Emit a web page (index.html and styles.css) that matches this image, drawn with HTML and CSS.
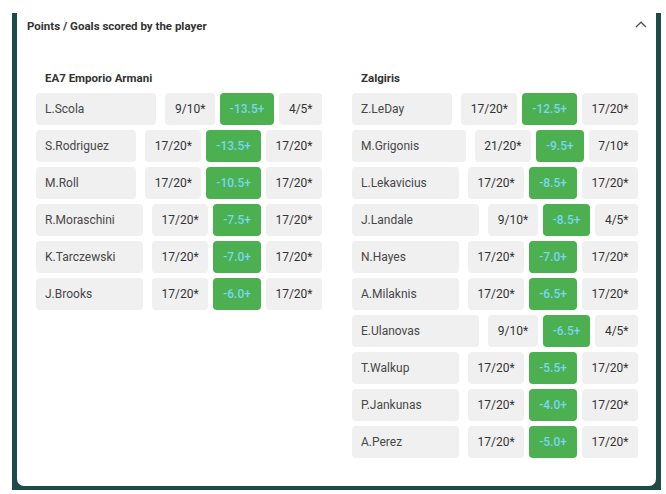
FILE: index.html
```html
<!DOCTYPE html>
<html>
<head>
<meta charset="utf-8">
<link rel="stylesheet" href="styles.css">
</head>
<body>
<div class="frame">
  <div class="card">
    <div class="header">
      <div class="title">Points / Goals scored by the player</div>
      <svg class="chev" width="12" height="7" viewBox="0 0 12 7"><path d="M1 6 L6 1.2 L11 6" fill="none" stroke="#555" stroke-width="1.3"/></svg>
    </div>
    <div class="columns">
      <div class="team">
        <div class="team-name">EA7 Emporio Armani</div>
        <div class="rows">
          <div class="row"><div class="name">L.Scola</div><div class="odd">9/10*</div><div class="line">-13.5+</div><div class="odd">4/5*</div></div>
          <div class="row"><div class="name">S.Rodriguez</div><div class="odd">17/20*</div><div class="line">-13.5+</div><div class="odd">17/20*</div></div>
          <div class="row"><div class="name">M.Roll</div><div class="odd">17/20*</div><div class="line">-10.5+</div><div class="odd">17/20*</div></div>
          <div class="row"><div class="name">R.Moraschini</div><div class="odd">17/20*</div><div class="line">-7.5+</div><div class="odd">17/20*</div></div>
          <div class="row"><div class="name">K.Tarczewski</div><div class="odd">17/20*</div><div class="line">-7.0+</div><div class="odd">17/20*</div></div>
          <div class="row"><div class="name">J.Brooks</div><div class="odd">17/20*</div><div class="line">-6.0+</div><div class="odd">17/20*</div></div>
        </div>
      </div>
      <div class="team">
        <div class="team-name">Zalgiris</div>
        <div class="rows">
          <div class="row"><div class="name">Z.LeDay</div><div class="odd">17/20*</div><div class="line">-12.5+</div><div class="odd">17/20*</div></div>
          <div class="row"><div class="name">M.Grigonis</div><div class="odd">21/20*</div><div class="line">-9.5+</div><div class="odd">7/10*</div></div>
          <div class="row"><div class="name">L.Lekavicius</div><div class="odd">17/20*</div><div class="line">-8.5+</div><div class="odd">17/20*</div></div>
          <div class="row"><div class="name">J.Landale</div><div class="odd">9/10*</div><div class="line">-8.5+</div><div class="odd">4/5*</div></div>
          <div class="row"><div class="name">N.Hayes</div><div class="odd">17/20*</div><div class="line">-7.0+</div><div class="odd">17/20*</div></div>
          <div class="row"><div class="name">A.Milaknis</div><div class="odd">17/20*</div><div class="line">-6.5+</div><div class="odd">17/20*</div></div>
          <div class="row"><div class="name">E.Ulanovas</div><div class="odd">9/10*</div><div class="line">-6.5+</div><div class="odd">4/5*</div></div>
          <div class="row"><div class="name">T.Walkup</div><div class="odd">17/20*</div><div class="line">-5.5+</div><div class="odd">17/20*</div></div>
          <div class="row"><div class="name">P.Jankunas</div><div class="odd">17/20*</div><div class="line">-4.0+</div><div class="odd">17/20*</div></div>
          <div class="row"><div class="name">A.Perez</div><div class="odd">17/20*</div><div class="line">-5.0+</div><div class="odd">17/20*</div></div>
        </div>
      </div>
    </div>
  </div>
</div>
</body>
</html>
```
FILE: styles.css
```css
html, body {
  margin: 0;
  padding: 0;
  background: #fff;
}
body {
  font-family: Roboto, "Liberation Sans", sans-serif;
  font-size: 12px;
  color: #3a3a3a;
}
.frame {
  margin-left: 12px;
  width: 649px;
  height: 490px;
  box-sizing: border-box;
  padding: 0 5px 4px 5px;
  background: linear-gradient(#fff 13px, #1d4b48 13px);
}
.card {
  background: #fff;
  height: 100%;
  border-radius: 0 0 7px 7px;
}
.header {
  display: flex;
  justify-content: space-between;
  align-items: center;
  padding: 19px 9px 0 10px;
  height: 14px;
}
.title {
  font-size: 11.5px;
  font-weight: 700;
  line-height: 14px;
  color: #333;
}
.chev {
  display: block;
  margin-top: -4px;
}
.columns {
  display: grid;
  grid-template-columns: 286px 286px;
  column-gap: 30px;
  padding-left: 19px;
  margin-top: 38px;
}
.team-name {
  font-size: 11.5px;
  font-weight: 700;
  line-height: 14px;
  padding-left: 9px;
  margin-bottom: 8px;
  color: #333;
}
.rows {
  display: flex;
  flex-direction: column;
  gap: 5px;
}
.row {
  display: flex;
  gap: 5px;
  height: 32px;
}
.row > div {
  display: flex;
  align-items: center;
  border-radius: 4px;
  background: #f0f0f0;
  white-space: nowrap;
}
.name {
  flex: 1;
  padding-left: 9px;
  margin-right: 4px;
  color: #474747;
}
.odd {
  padding: 0 9.5px;
  justify-content: center;
  color: #333;
}
.row > .line {
  background: #4caf50;
  color: #7ad6f2;
  padding: 0 10px;
  justify-content: center;
  font-weight: 500;
}
```
